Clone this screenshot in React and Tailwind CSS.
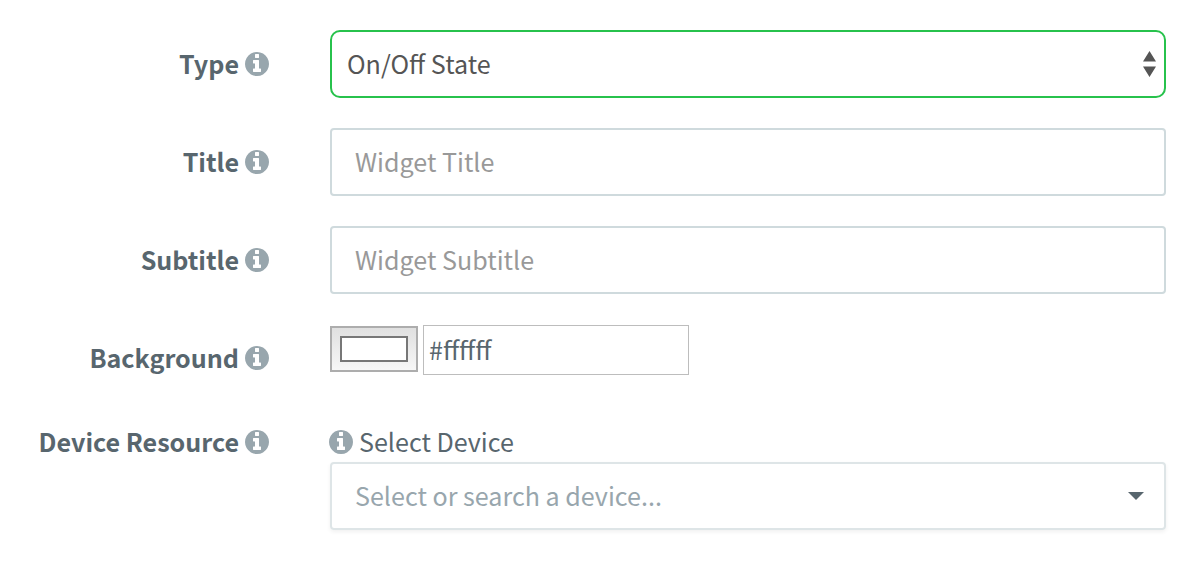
function InfoIcon() {
  return (
    <svg className="size-6 shrink-0 fill-[#98a6ad]" viewBox="128 128 1536 1536" aria-hidden="true">
      <path d="M1152 1376v-160q0-14-9-23t-23-9h-96v-512q0-14-9-23t-23-9h-320q-14 0-23 9t-9 23v160q0 14 9 23t23 9h96v320h-96q-14 0-23 9t-9 23v160q0 14 9 23t23 9h448q14 0 23-9t9-23zm-128-896v-192q0-14-9-23t-23-9h-192q-14 0-23 9t-9 23v192q0 14 9 23t23 9h192q14 0 23-9t9-23zm640 416q0 209-103 385.5t-279.5 279.5-385.5 103-385.5-103-279.5-279.5-103-385.5 103-385.5 279.5-279.5 385.5-103 385.5 103 279.5 279.5 103 385.5z" />
    </svg>
  );
}

function Row({ label, children, className = "h-[68px]", labelClass = "h-[68px]" }) {
  return (
    <div className={`flex ${className}`}>
      <div className={`flex w-[269px] shrink-0 items-center justify-end gap-1.5 font-bold ${labelClass}`}>
        <span className="pb-0.5 whitespace-nowrap">{label}</span>
        <InfoIcon />
      </div>
      <div className="ml-[61px] w-[836px]">{children}</div>
    </div>
  );
}

const inputClass =
  "block h-[68px] w-full rounded-[4px] border-2 border-[#cfdadd] bg-white px-[23px] pb-0.5 placeholder:text-[#999999] outline-none";

export default function App() {
  return (
    <form className="flex h-[588px] w-[1196px] flex-col bg-white pt-[30px] font-['Noto_Sans_CJK_SC',sans-serif] text-[25.1px] leading-[34px] text-[#58666e]">
      <Row label="Type">
        <div className="flex h-[68px] items-center justify-between rounded-[10px] border-2 border-[#27c24c] pr-2 pl-[15px] text-[#555555]">
          <span className="pb-0.5">On/Off State</span>
          <svg className="h-[26px] w-[13px] fill-[#555555]" viewBox="0 0 13 26" aria-hidden="true">
            <path d="M0 10.5 6.5 0 13 10.5zM0 15.5h13L6.5 26z" />
          </svg>
        </div>
      </Row>
      <Row label="Title" className="mt-[30px] h-[68px]">
        <input className={inputClass} placeholder="Widget Title" />
      </Row>
      <Row label="Subtitle" className="mt-[30px] h-[68px]">
        <input className={inputClass} placeholder="Widget Subtitle" />
      </Row>
      <Row label="Background" className="mt-[30px] h-[68px]">
        <div className="flex items-start gap-[5px] pt-px">
          <div className="mt-px h-[46px] w-[88px] border-2 border-[#adadad] bg-linear-to-b from-[#e0e0e0] to-[#f7f7f7] p-2">
            <div className="h-[26px] w-[68px] border-2 border-[#777777] bg-white" />
          </div>
          <input className="h-[50px] w-[266px] border border-[#bdbdbd] bg-white px-[5px] pb-0.5 outline-none" defaultValue="#ffffff" />
        </div>
      </Row>
      <Row label="Device Resource" className="mt-[33px] h-[105px]" labelClass="h-[34px]">
        <div className="-ml-px flex h-[34px] items-center gap-1.5">
          <InfoIcon />
          <span className="pb-0.5">Select Device</span>
        </div>
        <div className="mt-[3px] flex h-[68px] items-center justify-between rounded-[4px] border-2 border-[#dee5e7] pr-[20px] pl-[23px] text-[#98a6ad] shadow-[0_2px_4px_rgba(0,0,0,0.06)]">
          <span className="pb-0.5">Select or search a device...</span>
          <svg className="h-2 w-4 fill-[#58666e]" viewBox="0 0 16 8" aria-hidden="true">
            <path d="M0 0h16L8 8z" />
          </svg>
        </div>
      </Row>
    </form>
  );
}
